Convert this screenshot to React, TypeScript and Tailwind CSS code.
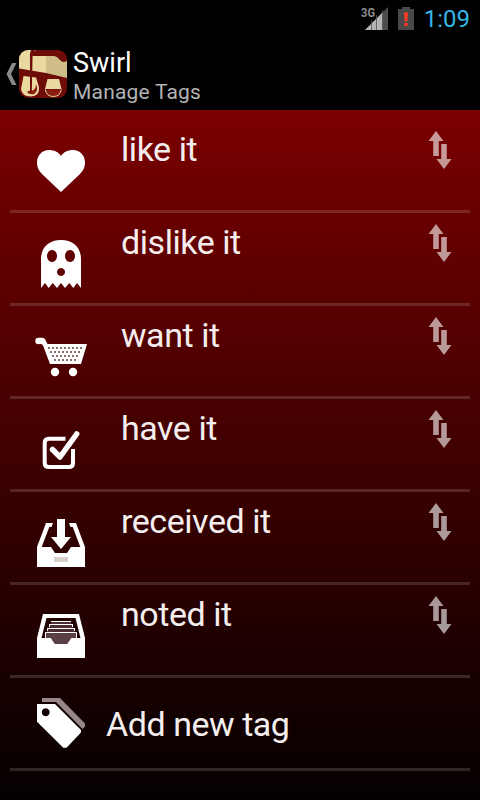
import type { ReactNode } from 'react';

function HeartIcon() {
  return (
    <svg viewBox="0 0 60 60" className="h-[60px] w-[60px]" fill="#fff">
      <path d="M30 48 L11.5 30.5 C7.5 26.5 6 23 6 18.5 C6 11.5 11 6 18 6 C23 6 27.500 8 30 12 C32.500 8 37 6 42 6 C49 6 54 11.500 54 18.500 C54 23 52.500 26.500 48.500 30.500 Z" />
    </svg>
  );
}

function GhostIcon() {
  return (
    <svg viewBox="0 0 60 60" className="h-[60px] w-[60px]">
      <path
        d="M10 51 V22 C10 10 18 3 30 3 C42 3 50 10 50 22 V51 L46 46 L42.300 51 L38.300 46 L34 51 L30 46 L26 51 L21.700 46 L17.700 51 L14 46 Z M21 13 a5 6 0 1 0 .01 0 Z M39 13 a5 6 0 1 0 .01 0 Z M30 31 a4 4 0 1 0 .01 0 Z"
        fill="#fff"
        fillRule="evenodd"
      />
    </svg>
  );
}

const CART_HOLES = [
  { y: 17, from: 17, count: 9 },
  { y: 21, from: 19, count: 8 },
  { y: 25, from: 21, count: 7 },
  { y: 29, from: 23, count: 6 },
];

function CartIcon() {
  return (
    <svg viewBox="0 0 60 60" className="h-[60px] w-[60px]" fill="#fff">
      <path d="M7.500 7.800 H11 C13 7.800 14 9 15 11 L16.500 14 H56 L50 34 H19 L12 15.500 C10.500 13.500 9.500 14.200 7.500 14.200 A3.200 3.200 0 0 1 7.500 7.800 Z" />
      <circle cx="24" cy="42" r="4.200" />
      <circle cx="42" cy="42" r="4.200" />
      {CART_HOLES.map(({ y, from, count }) =>
        Array.from({ length: count }, (_, i) => (
          <rect key={`${y}-${i}`} x={from + i * 4} y={y} width="2" height="2" fill="#8d6c6c" />
        ))
      )}
    </svg>
  );
}

function CheckIcon() {
  return (
    <svg viewBox="0 0 60 60" className="h-[60px] w-[60px]" fill="none" stroke="#fff">
      <path d="M34.500 15.700 H18 Q13.700 15.700 13.700 20 V40 Q13.700 44 18 44 H38 Q42 44 42 40 V26" strokeWidth="4" />
      <path d="M21.500 26.500 L29 34 L45.700 11" strokeWidth="5.500" strokeLinecap="round" strokeLinejoin="round" />
    </svg>
  );
}

function InboxDownIcon() {
  return (
    <svg viewBox="0 0 60 60" className="h-[60px] w-[60px]" fill="#fff">
      <path d="M15 7 H22 L20.500 11 H18.300 L10.700 31 H20 L24 37 H36 L40 31 H49.300 L41.700 11 H39.500 L38 7 H45 L54 31 V51 H6 V31 Z" />
      <path d="M26 3 H34 V21 H40 L30 33 L20 21 H26 Z" />
      <rect x="23" y="41" width="14" height="5" fill="#d9d0d0" />
    </svg>
  );
}

function InboxFilledIcon() {
  return (
    <svg viewBox="0 0 60 60" className="h-[60px] w-[60px]">
      <path d="M12 5 H48 L54 29 V49 H6 V29 Z M15.500 9 L10.500 29 H20 L24 35 H36 L40 29 H49.500 L44.500 9 Z" fill="#fff" fillRule="evenodd" />
      <path d="M14 23 H46 V29 H40 L36 35 H24 L20 29 H14 Z" fill="#5a4044" />
      <path d="M20 12 H40 V15 H20 Z M18 15 H42 V19 H18 Z M16 19 H44 V23 H16 Z" fill="#4a2e31" />
      <path d="M20 12.500 H40 M18 15.500 H42 M16 19.500 H44 M14.500 29 V23.500 H45.500 V29 M18.500 15 V18 M41.500 15 V18 M16.500 19 V22 M43.500 19 V22" fill="none" stroke="#fff" />
    </svg>
  );
}

function TagsIcon() {
  return (
    <svg viewBox="0 -6 60 60" className="h-[60px] w-[60px]">
      <path d="M11 -4 H29 L54 21.500 V24.500 L51.500 27 L25 0 H11 Z" fill="#968789" />
      <path
        d="M6 2 H24 L50 28 V30.500 L35.500 45.700 H32.300 L6 19.700 Z M14.700 6.300 a4 4 0 1 0 .01 0 Z"
        fill="#fff"
        fillRule="evenodd"
      />
    </svg>
  );
}

function SortIcon() {
  return (
    <svg viewBox="0 0 24 38" className="h-[38px] w-[24px]" fill="#fff" fillOpacity="0.6">
      <path d="M8 0 L15.500 10 H10.800 V25 H5.200 V10 H.5 Z" />
      <path d="M13.200 13 H18.800 V28 H23.500 L16 38 L8.500 28 H13.200 Z" />
    </svg>
  );
}

function AppLogo() {
  return (
    <svg viewBox="0 0 48 48" className="h-12 w-12 rounded-[9px]">
      <rect width="48" height="48" fill="#6e0d07" />
      {/* background panels */}
      <path d="M0 0 H17 Q13 2 13 6 H27 V23 L0 18.500 Z" fill="#e9d8a0" />
      <path d="M27 6 H35 C40 7 41 12 45 12 L48 11 V28 L27 23 Z" fill="#cfbd88" />
      {/* left glass */}
      <path d="M4.500 26 L17 27.500 L20 37 Q21 46 12 46.500 Q3 46.500 2 39 Z" fill="#e9d8a0" />
      <path d="M8 42 Q10 40 12 41 Q17 40 17 34 Q20 41 15 44 Q10 45 8 42 Z" fill="#8a1c10" />
      {/* pour */}
      <path d="M12 0 H16 Q13.500 3 13.500 8 L12.800 42 H11 L11 8 Q10.500 3 12 0 Z" fill="#6e0d07" />
      {/* right glass */}
      <path d="M28.500 29 H40 L42.500 39 H26 Z" fill="#e9d8a0" />
      <path d="M26.300 39.500 Q27.500 46.500 34.300 46.500 Q41.200 46.500 42.300 39.500" fill="#8a1c10" stroke="#e9d8a0" />
    </svg>
  );
}

const TAGS: { label: string; icon: ReactNode }[] = [
  { label: 'like it', icon: <HeartIcon /> },
  { label: 'dislike it', icon: <GhostIcon /> },
  { label: 'want it', icon: <CartIcon /> },
  { label: 'have it', icon: <CheckIcon /> },
  { label: 'received it', icon: <InboxDownIcon /> },
  { label: 'noted it', icon: <InboxFilledIcon /> },
];

function StatusBar() {
  return (
    <div className="flex h-[38px] items-start justify-end pr-[10px]">
      <svg viewBox="0 0 28 26" className="mt-[6px] mr-[9px] h-[26px] w-[28px]">
        <path d="M27 1 V24 H4 Z" fill="#4c4c4c" />
        <path d="M21.500 6.500 V24 H4 Z" fill="#b4b4b4" />
        <path d="M10.500 14 V24 M15.500 9 V24 M21.500 4 V24" stroke="#555" strokeWidth="0.8" />
        <text x="0" y="11" fontSize="12" fontWeight="700" fontFamily="Roboto, sans-serif" fill="#8c8c8c" textLength="14" lengthAdjust="spacingAndGlyphs">
          3G
        </text>
      </svg>
      <svg viewBox="0 0 16 24" className="mt-[6px] mr-[10px] h-6 w-4">
        <path d="M4 1 H12 V3 H16 V24 H0 V3 H4 Z" fill="#484848" />
        <path d="M6 6.500 H10 L9.300 15.500 H6.700 Z M6.300 17 H9.700 V20 H6.300 Z" fill="#ff3a20" />
      </svg>
      <span className="mt-[5px] text-[24px] leading-[28px] text-[#33b5e5]">1:09</span>
    </div>
  );
}

function ActionBar() {
  return (
    <div className="flex h-[72px] items-start">
      <svg viewBox="0 0 11 22" className="mt-[25px] ml-[6px] h-[22px] w-[11px]">
        <path d="M6 0 H10.500 L5 11 L10.500 22 H6 L.5 11 Z" fill="#888" />
      </svg>
      <div className="mt-3 ml-[2px]">
        <AppLogo />
      </div>
      <div className="mt-[9px] ml-[6px]">
        <h1 className="text-[27px] leading-[32px] text-white">Swirl</h1>
        <p className="mt-px text-[21px] leading-[25px] tracking-[0.2px] text-[#b4b4b4]">Manage Tags</p>
      </div>
    </div>
  );
}

export default function App() {
  return (
    <div className="h-[800px] w-[480px] overflow-hidden bg-black font-['Roboto',sans-serif]">
      <StatusBar />
      <ActionBar />
      <ul className="h-[690px] bg-linear-to-b/srgb from-[#7a0000] to-[#040000] px-[10px] pt-[10px] text-[34px] leading-[40px] tracking-[-0.45px] text-[#f5eeee]">
        {TAGS.map(({ label, icon }) => (
          <li key={label} className="flex h-[93px] items-start border-b-[3px] border-white/15">
            <div className="mt-6 ml-[21px] shrink-0">{icon}</div>
            <span className="mt-[9px] ml-[30px] flex-1">{label}</span>
            <div className="mt-[11px] mr-[18px]">
              <SortIcon />
            </div>
          </li>
        ))}
        <li className="flex h-[93px] items-start border-b-[3px] border-white/15">
          <div className="mt-[18px] ml-[21px] shrink-0">
            <TagsIcon />
          </div>
          <span className="mt-[26px] ml-[15px]">Add new tag</span>
        </li>
      </ul>
    </div>
  );
}
